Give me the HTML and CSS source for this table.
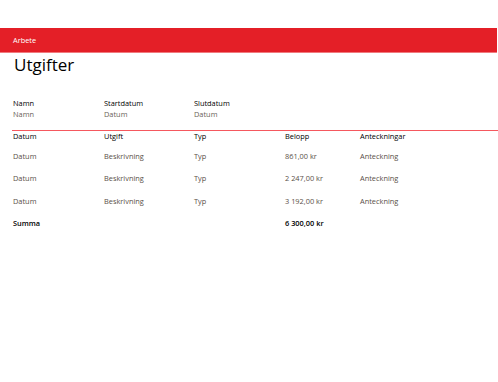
FILE: index.html
```html
<!DOCTYPE html>
<html>
<head>
<meta charset="utf-8">
<link rel="stylesheet" href="styles.css">
</head>
<body>
<div class="bar">Arbete</div>
<h1 class="title">Utgifter</h1>
<div class="info">
  <div class="field"><div class="label">Namn</div><div class="value">Namn</div></div>
  <div class="field"><div class="label">Startdatum</div><div class="value">Datum</div></div>
  <div class="field"><div class="label">Slutdatum</div><div class="value">Datum</div></div>
</div>
<div class="table">
  <div class="row head">
    <div>Datum</div><div>Utgift</div><div>Typ</div><div>Belopp</div><div>Anteckningar</div>
  </div>
  <div class="row">
    <div>Datum</div><div>Beskrivning</div><div>Typ</div><div>861,00 kr</div><div>Anteckning</div>
  </div>
  <div class="row">
    <div>Datum</div><div>Beskrivning</div><div>Typ</div><div>2 247,00 kr</div><div>Anteckning</div>
  </div>
  <div class="row">
    <div>Datum</div><div>Beskrivning</div><div>Typ</div><div>3 192,00 kr</div><div>Anteckning</div>
  </div>
  <div class="row total">
    <div>Summa</div><div></div><div></div><div>6 300,00 kr</div><div></div>
  </div>
</div>
</body>
</html>
```
FILE: styles.css
```css
html, body {
  margin: 0;
  padding: 0;
  background: #fff;
}
body {
  font-family: "Open Sans", "Noto Sans", sans-serif;
  font-size: 7.4px;
  color: #000;
  padding-top: 28px;
}
.bar {
  height: 24px;
  background: #e41f27;
  border-bottom: 1px solid #f07a7e;
  color: #fff;
  line-height: 24px;
  padding-left: 13px;
  margin-right: 1px;
}
.title {
  margin: 0;
  padding-left: 14px;
  font-weight: normal;
  font-size: 17px;
  line-height: 23px;
}
.info {
  display: grid;
  grid-template-columns: 91px 90px 91px;
  padding-left: 13px;
  margin-top: 22px;
}
.label {
  color: #000;
  line-height: 11px;
}
.value {
  color: #6a5f58;
  line-height: 11px;
}
.table {
  margin-top: 10px;
  margin-left: 12px;
  border-top: 1px solid #f5585e;
}
.row {
  display: grid;
  grid-template-columns: 91px 90px 91px 75px 1fr;
  padding-left: 1px;
  height: 22.4px;
  line-height: 11px;
  color: #5a4f48;
}
.row.head {
  color: #000;
  height: 20px;
  font-weight: 500;
}
.row.total {
  color: #000;
  font-weight: 600;
}
```
